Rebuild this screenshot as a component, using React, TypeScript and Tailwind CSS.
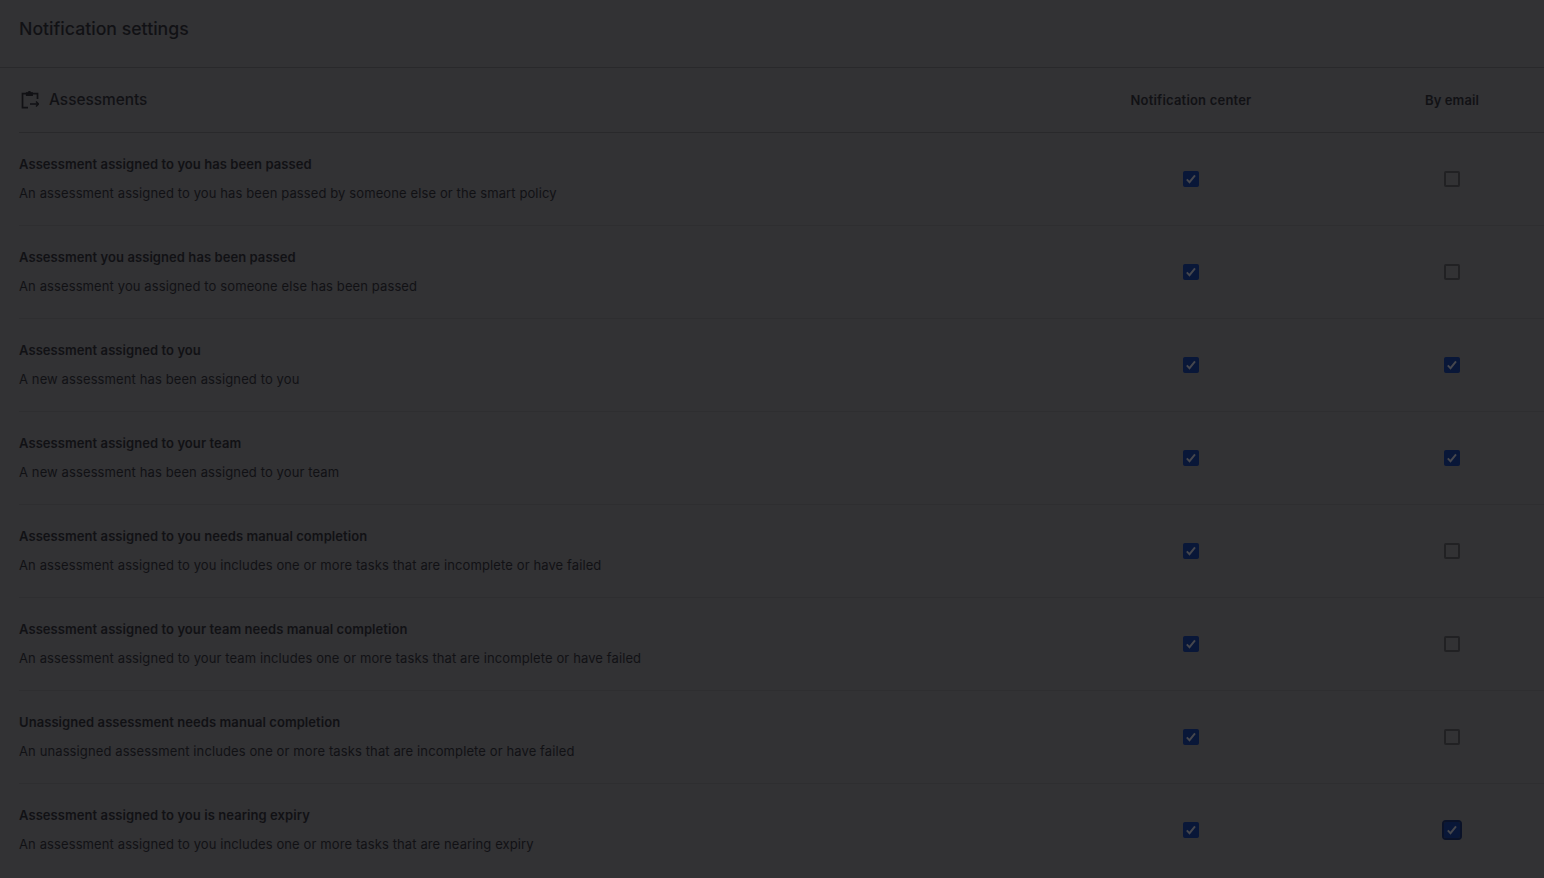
const rows = [
  { title: "Assessment assigned to you has been passed", desc: "An assessment assigned to you has been passed by someone else or the smart policy", email: false },
  { title: "Assessment you assigned has been passed", desc: "An assessment you assigned to someone else has been passed", email: false },
  { title: "Assessment assigned to you", desc: "A new assessment has been assigned to you", email: true },
  { title: "Assessment assigned to your team", desc: "A new assessment has been assigned to your team", email: true },
  { title: "Assessment assigned to you needs manual completion", desc: "An assessment assigned to you includes one or more tasks that are incomplete or have failed", email: false },
  { title: "Assessment assigned to your team needs manual completion", desc: "An assessment assigned to your team includes one or more tasks that are incomplete or have failed", email: false },
  { title: "Unassigned assessment needs manual completion", desc: "An unassigned assessment includes one or more tasks that are incomplete or have failed", email: false },
  { title: "Assessment assigned to you is nearing expiry", desc: "An assessment assigned to you includes one or more tasks that are nearing expiry", email: true, focused: true },
];

function Checkbox({ checked, focused }: { checked: boolean; focused?: boolean }) {
  if (!checked) {
    return <span className="block h-4 w-4 rounded-[2px] border-2 border-[#212123]" />;
  }
  return (
    <span
      className={
        "flex h-4 w-4 items-center justify-center rounded-[2px] bg-[#091738] " +
        (focused ? "outline-2 outline-[#0a1228]" : "")
      }
    >
      <svg width="14" height="14" viewBox="0 0 14 14" fill="none">
        <path d="M2.8 7.4 5.5 10.2 11 3.4" stroke="#46474d" strokeWidth="1.9" />
      </svg>
    </span>
  );
}

function AssessmentIcon() {
  return (
    <svg width="20" height="20" viewBox="0 0 20 20" fill="none" stroke="#111114" strokeWidth="1.7">
      <path d="M8 3.6H3.5v14H9" />
      <path d="M12 3.6h6.5V9" />
      <path d="M7.5 5.5V2.8h1.7a1.2 1.2 0 0 1 2.4 0h1.7v2.7Z" fill="#111114" strokeWidth="1.2" />
      <path d="M11 14h8.5M17 11.5l2.5 2.5-2.5 2.5" strokeWidth="1.4" />
    </svg>
  );
}

export default function App() {
  return (
    <div className="h-[878px] w-[1544px] overflow-hidden bg-[#323234] font-['Inter',sans-serif] text-[#111114]">
      <header className="flex h-[68px] items-center border-b border-[#29292b] pb-[8px] pl-[19px]">
        <h1 className="text-[17.7px] font-medium">Notification settings</h1>
      </header>
      <div className="pl-[19px]">
        <div className="flex h-[65px] items-center border-b border-[#29292b]">
          <div className="flex flex-1 items-center gap-[10px]">
            <AssessmentIcon />
            <h2 className="pb-px text-[15.4px] font-medium">Assessments</h2>
          </div>
          <div className="w-[200px] pt-[2px] text-center text-[13px] font-semibold tracking-[0.2px]">Notification center</div>
          <div className="ml-[69px] w-[184px] pt-[2px] text-center text-[13px] font-semibold tracking-[0.1px]">By email</div>
        </div>
        {rows.map((row) => (
          <div key={row.title} className="flex h-[93px] items-center border-b border-[#2e2e30] last:border-transparent">
            <div className="flex-1 pb-[2px]">
              <div className="text-[13px] font-semibold leading-[20px] tracking-[0.07px]">{row.title}</div>
              <div className="mt-[9px] text-[13px] leading-[20px] tracking-[0.11px]">{row.desc}</div>
            </div>
            <div className="flex w-[200px] justify-center">
              <Checkbox checked />
            </div>
            <div className="ml-[69px] flex w-[184px] justify-center">
              <Checkbox checked={row.email} focused={row.focused} />
            </div>
          </div>
        ))}
      </div>
    </div>
  );
}
